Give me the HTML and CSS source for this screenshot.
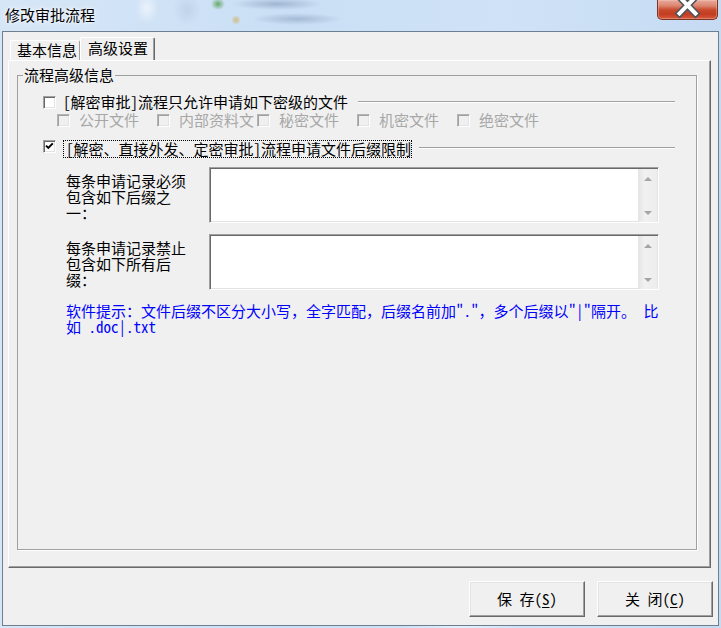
FILE: index.html
```html
<!DOCTYPE html>
<html lang="zh-CN">
<head>
<meta charset="utf-8">
<title>修改审批流程</title>
<link rel="stylesheet" href="styles.css">
</head>
<body>
<div class="window">
  <div class="titlebar">
    <span class="title">修改审批流程</span>
    <div class="close">
      <svg width="59" height="19" viewBox="0 0 59 19">
        <path d="M21.5 -3 L37.5 13.5 M37.5 -3 L21.5 13.5" stroke="#4b525c" stroke-width="7" stroke-linecap="square" fill="none"/>
        <path d="M21.5 -3 L37.5 13.5 M37.5 -3 L21.5 13.5" stroke="#ffffff" stroke-width="4" stroke-linecap="square" fill="none"/>
      </svg>
    </div>
  </div>
  <div class="client">
    <div class="tabs">
      <div class="tab">基本信息</div>
      <div class="tab active">高级设置</div>
    </div>
    <div class="page">
      <fieldset class="group">
        <legend>流程高级信息</legend>
        <div class="row row-first">
          <span class="cb"></span>
          <span class="cb-label">[解密审批]流程只允许申请如下密级的文件</span>
          <span class="rule"></span>
        </div>
        <div class="row levels">
          <div class="level"><span class="cb disabled"></span><span class="level-label">公开文件</span></div>
          <div class="level"><span class="cb disabled"></span><span class="level-label">内部资料文</span></div>
          <div class="level"><span class="cb disabled"></span><span class="level-label">秘密文件</span></div>
          <div class="level"><span class="cb disabled"></span><span class="level-label">机密文件</span></div>
          <div class="level"><span class="cb disabled"></span><span class="level-label">绝密文件</span></div>
        </div>
        <div class="row row-third">
          <span class="cb"><svg width="9" height="9" viewBox="0 0 9 9"><path d="M1 3.6 L3.3 5.9 L7.8 1.4" fill="none" stroke="#000" stroke-width="2"/></svg></span>
          <span class="cb-label focus">[解密、直接外发、定密审批]流程申请文件后缀限制</span>
          <span class="rule"></span>
        </div>
        <div class="field">
          <div class="field-label">每条申请记录必须包含如下后缀之一：</div>
          <div class="edit">
            <div class="edit-area"></div>
            <div class="vscroll"><span class="arr up"></span><span class="arr down"></span></div>
          </div>
        </div>
        <div class="field field-second">
          <div class="field-label">每条申请记录禁止包含如下所有后缀：</div>
          <div class="edit">
            <div class="edit-area"></div>
            <div class="vscroll"><span class="arr up"></span><span class="arr down"></span></div>
          </div>
        </div>
        <p class="hint">软件提示：文件后缀不区分大小写，全字匹配，后缀名前加"."，多个后缀以"|"隔开。 比如 .doc|.txt</p>
      </fieldset>
    </div>
    <div class="buttons">
      <button class="btn" type="button">保 存(<u>S</u>)</button>
      <button class="btn" type="button">关 闭(<u>C</u>)</button>
    </div>
  </div>
</div>
</body>
</html>
```
FILE: styles.css
```css
* { box-sizing: border-box; }
html, body { margin: 0; padding: 0; }
body {
  width: 721px;
  height: 628px;
  overflow: hidden;
  font-family: "Noto Sans Mono CJK SC", "Noto Sans CJK SC", "Noto Sans CJK JP", monospace;
  font-size: 15px;
  line-height: 16px;
  color: #000;
  background: #c9dcf1;
  text-spacing-trim: space-all;
}
.window {
  width: 721px;
  height: 628px;
  display: flex;
  flex-direction: column;
  padding: 0 2px 2px 2px;
  background:
    radial-gradient(ellipse 60px 8px at 460px 628px, rgba(255,255,255,.5), transparent),
    linear-gradient(to right, #d6e6f7, #cadff5 40%, #cfe2f7 70%, #c6dbf2);
}
.titlebar {
  height: 31px;
  flex: none;
  display: flex;
  align-items: flex-start;
  padding-left: 3px;
  background:
    radial-gradient(ellipse 7px 6px at 216px 4px, rgba(70,150,60,.75), transparent),
    radial-gradient(ellipse 45px 6px at 275px 4px, rgba(110,130,165,.45), transparent),
    radial-gradient(ellipse 5px 5px at 234px 20px, rgba(210,170,80,.7), transparent),
    radial-gradient(ellipse 45px 6px at 295px 19px, rgba(110,130,165,.4), transparent),
    radial-gradient(ellipse 12px 16px at 145px 8px, rgba(255,255,255,.55), transparent),
    radial-gradient(ellipse 14px 16px at 185px 10px, rgba(150,170,195,.25), transparent);
}
.title {
  margin-top: 7px;
  font-family: "Noto Sans CJK SC", sans-serif;
  color: #000;
  text-shadow: 0 0 6px rgba(255,255,255,.95), 0 0 3px rgba(255,255,255,.9);
}
.close {
  margin-left: auto;
  margin-right: 1px;
  width: 61px;
  height: 20px;
  border: 1px solid #7a3426;
  border-top: none;
  border-radius: 0 0 5px 5px;
  background: linear-gradient(#e8ab9c, #dc8670 30%, #c9492d 52%, #c23d21 75%, #d75a3c);
  box-shadow: inset 0 0 0 1px rgba(255,210,200,.35);
  overflow: hidden;
}
.close svg { display: block; }

.client {
  flex: 1;
  display: flex;
  flex-direction: column;
  background: #f0f0f0;
  border: 1px solid #6f7f92;
}
.tabs {
  height: 28px;
  flex: none;
  display: flex;
  align-items: flex-end;
  padding: 5px 0 0 7px;
}
.tab {
  height: 20px;
  padding: 1px 2px 0 6px;
  border-top: 1px solid #fff;
  border-left: 1px solid #fff;
  border-right: 1px solid #a0a0a0;
  border-radius: 2px 2px 0 0;
  white-space: nowrap;
}
.tab.active {
  height: 23px;
  padding: 2px 6px 0 7px;
  border-right: 1px solid #696969;
  box-shadow: inset -1px 0 0 #a0a0a0;
}
.page {
  height: 508px;
  flex: none;
  margin: 0 7px 0 5px;
  display: flex;
  flex-direction: column;
  border: 1px solid;
  border-color: #fff #696969 #696969 #fff;
  box-shadow: inset -1px -1px 0 #a0a0a0;
}
.group {
  flex: 1;
  margin: 6px 13px 17px 8px;
  padding: 0;
  min-width: 0;
  border: 1px solid #a0a0a0;
  box-shadow: 1px 1px 0 #fff;
}
.group legend {
  margin-left: 5px;
  padding: 0 1px;
  line-height: 16px;
}
.row {
  display: flex;
  align-items: center;
  height: 16px;
  padding-left: 25px;
}
.row-first { margin-top: 11px; }
.levels { margin-top: 2px; padding-left: 39px; }
.row-third {
  margin-top: 12px;
  height: 18px;
  align-items: flex-start;
}
.cb {
  width: 13px;
  height: 13px;
  flex: none;
  display: flex;
  align-items: center;
  justify-content: center;
  border: 1px solid;
  border-color: #a0a0a0 #fff #fff #a0a0a0;
  box-shadow: inset 1px 1px 0 #696969, inset -1px -1px 0 #e3e3e3;
  background: #fff;
}
.cb svg { display: block; }
.cb.disabled {
  background: #f0f0f0;
  border-color: #b4b4b4 #fff #fff #b4b4b4;
  box-shadow: inset 1px 1px 0 #a0a0a0, inset -1px -1px 0 #e3e3e3;
}
.cb-label {
  margin-left: 7px;
  white-space: nowrap;
}
.focus {
  margin-left: 7px;
  padding: 0 0 0 2px;
  border: 1px dotted #000;
}
.rule {
  flex: 1;
  height: 2px;
  margin: 0 21px 0 10px;
  border-top: 1px solid #a0a0a0;
  border-bottom: 1px solid #fff;
}
.row-third .rule { margin: 7px 21px 0 7px; }
.level {
  width: 100px;
  flex: none;
  display: flex;
  align-items: center;
}
.level .cb { margin-right: 9px; }
.level-label {
  width: 78px;
  white-space: nowrap;
  color: #a7a7a7;
}
.field {
  display: flex;
  align-items: flex-start;
  margin-top: 9px;
  padding-left: 48px;
}
.field-second { margin-top: 11px; }
.field-label {
  width: 128px;
  margin-right: 15px;
  padding-top: 6px;
}
.edit {
  width: 450px;
  height: 56px;
  display: flex;
  padding: 1px;
  border: 1px solid;
  border-color: #a0a0a0 #fff #fff #a0a0a0;
  box-shadow: inset 1px 1px 0 #696969, inset -1px -1px 0 #e3e3e3;
  background: #fff;
}
.edit-area { flex: 1; background: #fff; }
.vscroll {
  width: 19px;
  margin-bottom: -1px;
  display: flex;
  flex-direction: column;
  justify-content: space-between;
  align-items: center;
  padding: 8px 0 7px;
  background: linear-gradient(to right, #e4e4e4, #f1f1f1 35%, #ededed);
}
.arr {
  width: 0;
  height: 0;
  border-left: 4px solid transparent;
  border-right: 4px solid transparent;
}
.arr.up { border-bottom: 4px solid #a5a5a5; }
.arr.down { border-top: 4px solid #a5a5a5; }
.hint {
  margin: 13px 0 0 48px;
  width: 596px;
  color: #0000ff;
  line-height: 16px;
}
.buttons {
  flex: none;
  display: flex;
  justify-content: flex-end;
  gap: 12px;
  margin-top: 13px;
  padding-right: 5px;
}
.btn {
  width: 116px;
  height: 36px;
  padding: 0;
  font-family: inherit;
  font-size: 15px;
  line-height: 16px;
  color: #000;
  background: #f0f0f0;
  border: 1px solid;
  border-color: #fff #696969 #696969 #fff;
  box-shadow: inset -1px -1px 0 #a0a0a0, inset 1px 1px 0 #e3e3e3;
  border-radius: 0;
}
.btn u { text-underline-offset: 2px; }
```
